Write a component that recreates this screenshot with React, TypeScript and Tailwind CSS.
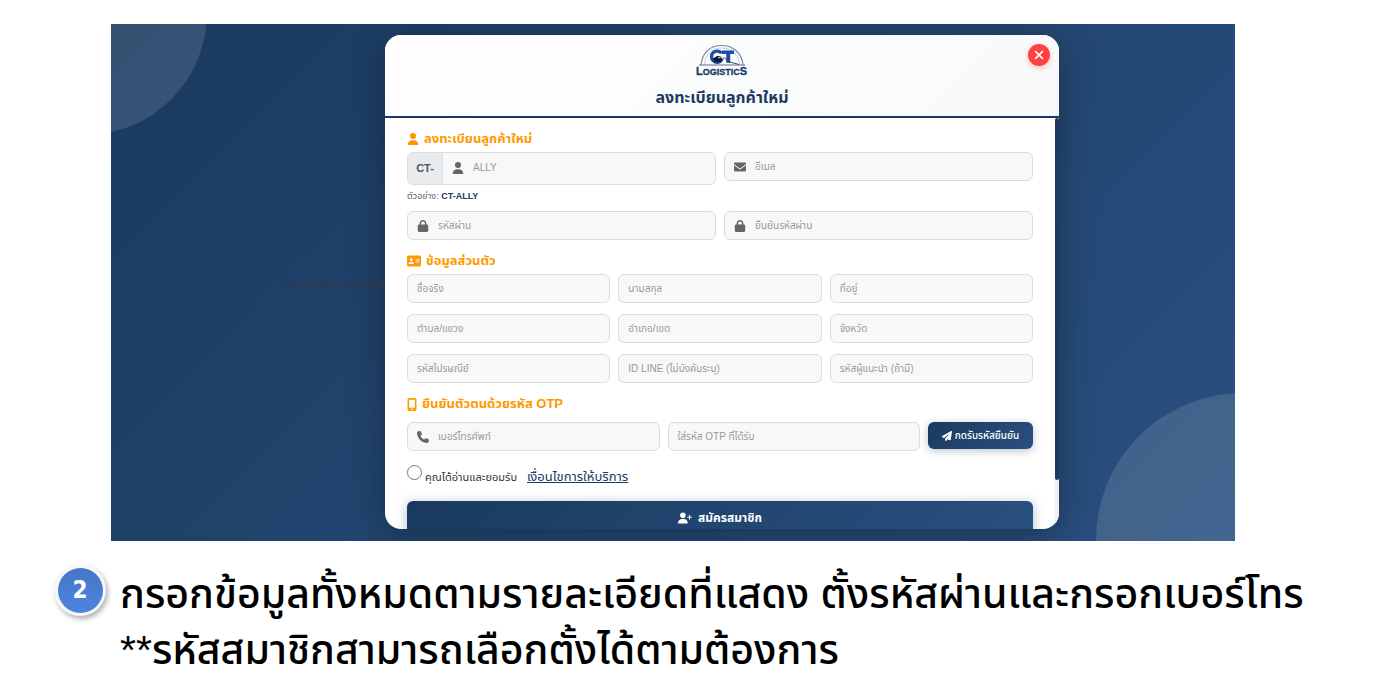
import type { ReactNode } from 'react'
import {
  FaAddressCard,
  FaEnvelope,
  FaLock,
  FaMobileScreenButton,
  FaPaperPlane,
  FaPhone,
  FaUser,
  FaUserPlus,
  FaXmark,
} from 'react-icons/fa6'

interface FieldProps {
  label: string
  type?: string
  icon?: ReactNode
}

function Field({ label, type = 'text', icon }: FieldProps) {
  return (
    <label className="flex h-[29px] min-w-0 items-center rounded-md border border-[#dcdcdc] bg-[#f8f8f8] px-[9px] text-xs text-[#666]">
      {icon && <span className="w-[21px] flex-shrink-0">{icon}</span>}
      <input
        type={type}
        aria-label={label}
        placeholder={label}
        className="w-full min-w-0 bg-transparent text-[10px] outline-none placeholder:text-[#999]"
      />
    </label>
  )
}

function SectionTitle({ icon, children }: { icon: ReactNode; children: ReactNode }) {
  return (
    <h2 className="flex h-5 items-center gap-[5px] text-[13px] font-bold text-[#ff9800]">
      {icon}
      {children}
    </h2>
  )
}

function Logo() {
  return (
    <svg width="54" height="34" viewBox="0 0 54 34" role="img" aria-label="CT Logistics">
      <path d="M6 21C7 9 15 1.500 26.500 1.500S47 9 48 21" fill="none" stroke="#7587a5" strokeWidth="1.1" />
      <path d="M9.500 20.500C10.500 10.500 16 4 26.500 4S43.500 10.500 44.500 20.500" fill="none" stroke="#b3bfd1" strokeWidth="0.8" />
      {/* Monogram */}
      <path d="M27 6.500h12v3.600h-3.800v8.600h-4v-8.600h-4.200z" fill="#1e4ba3" />
      <path d="M26.500 9.200A5.600 5.600 0 1 0 26.500 16.200" fill="none" stroke="#1e4ba3" strokeWidth="3.400" />
      {/* Handshake */}
      <path d="M18 14.500l4.500-2.800 3.500.8 3 2.500-2.500 2.500-3.500 1-4-1z" fill="#0d1b3d" />
      <path d="M23 14l2.500-1 2.500 2" fill="none" stroke="#fff" strokeWidth="0.900" />
      <path d="M28.500 13l4.500 4.500 11 3" fill="none" stroke="#1a3a5f" strokeWidth="0.900" />
      <path d="M4 21h46" stroke="#4a5f80" strokeWidth="0.900" />
      <text x="1" y="30.500" fontFamily="Liberation Sans, sans-serif" fontWeight="700" fill="#1a3a6b" stroke="#1a3a6b" strokeWidth="0.300">
        <tspan fontSize="11">L</tspan>
        <tspan fontSize="9">OGISTIC</tspan>
        <tspan fontSize="11">S</tspan>
      </text>
    </svg>
  )
}

function RegisterModal() {
  return (
    <section className="flex h-[494px] min-w-0 flex-col overflow-hidden rounded-2xl bg-white shadow-[0_8px_36px_rgba(0,0,0,0.3)]">
      <header className="relative flex h-[83px] flex-shrink-0 flex-col items-center border-b-2 border-[#1a3a5f] bg-linear-135 from-white to-[#f8f9fa] pt-[9px]">
        <Logo />
        <h1 className="mt-2 text-base leading-6 font-bold text-[#1a3a5f]">ลงทะเบียนลูกค้าใหม่</h1>
        <button
          type="button"
          aria-label="ปิด"
          className="absolute top-[9px] right-[9px] flex size-[22px] items-center justify-center rounded-full bg-[#ff4141] text-sm text-white shadow-[0_2px_6px_rgba(255,65,65,0.3)]"
        >
          <FaXmark />
        </button>
      </header>

      <div className="flex min-h-0 flex-1">
        <form className="min-w-0 flex-1 overflow-hidden px-[22px] pt-[11px]">
          <SectionTitle icon={<FaUser className="text-xs" />}>ลงทะเบียนลูกค้าใหม่</SectionTitle>
          <div className="mt-[3px] grid grid-cols-2 items-start gap-x-2">
            <div>
              <div className="flex h-[33px] overflow-hidden rounded-md border border-[#dcdcdc] bg-[#f8f8f8]">
                <span className="flex w-[35px] items-center justify-center border-r border-[#dcdcdc] bg-[#e9ecef] text-[11px] font-bold text-[#555]">
                  CT-
                </span>
                <label className="flex h-[29px] flex-1 items-center pl-[9px] text-xs text-[#666]">
                  <FaUser className="mr-[9px] flex-shrink-0" />
                  <input
                    aria-label="รหัสสมาชิก"
                    placeholder="ALLY"
                    className="w-full min-w-0 bg-transparent text-[10px] outline-none placeholder:text-[#999]"
                  />
                </label>
              </div>
              <p className="mt-1 h-[14px] text-[9px] leading-[14px] text-[#666]">
                ตัวอย่าง: <strong className="text-[#1a3a5f]">CT-ALLY</strong>
              </p>
            </div>
            <Field label="อีเมล" type="email" icon={<FaEnvelope />} />
          </div>
          <div className="mt-2 grid grid-cols-2 gap-x-2">
            <Field label="รหัสผ่าน" type="password" icon={<FaLock />} />
            <Field label="ยืนยันรหัสผ่าน" type="password" icon={<FaLock />} />
          </div>

          <div className="mt-[11px]">
            <SectionTitle icon={<FaAddressCard className="text-sm" />}>ข้อมูลส่วนตัว</SectionTitle>
          </div>
          <div className="mt-[3px] grid grid-cols-3 gap-x-2 gap-y-[11px]">
            <Field label="ชื่อจริง" />
            <Field label="นามสกุล" />
            <Field label="ที่อยู่" />
            <Field label="ตำบล/แขวง" />
            <Field label="อำเภอ/เขต" />
            <Field label="จังหวัด" />
            <Field label="รหัสไปรษณีย์" />
            <Field label="ID LINE (ไม่บังคับระบุ)" />
            <Field label="รหัสผู้แนะนำ (ถ้ามี)" />
          </div>

          <div className="mt-[11px]">
            <SectionTitle icon={<FaMobileScreenButton className="w-[10px]" />}>ยืนยันตัวตนด้วยรหัส OTP</SectionTitle>
          </div>
          <div className="mt-2 grid grid-cols-[1fr_1fr_105px] gap-x-2">
            <Field label="เบอร์โทรศัพท์" type="tel" icon={<FaPhone />} />
            <Field label="ใส่รหัส OTP ที่ได้รับ" />
            <button
              type="button"
              className="flex h-[27px] items-center justify-center gap-[3px] rounded-md bg-linear-135 from-[#1a3a5f] to-[#2a5080] text-[10px] font-medium whitespace-nowrap text-white shadow-[0_2px_8px_rgba(26,58,95,0.3)]"
            >
              <FaPaperPlane />
              กดรับรหัสยืนยัน
            </button>
          </div>

          <div className="mt-[14px] flex h-6 items-start">
            <input
              type="radio"
              id="terms"
              className="size-[15px] appearance-none rounded-full border border-[#767676] bg-white"
            />
            <label htmlFor="terms" className="ml-[3px] pt-1 text-[11px] leading-4 text-[#333]">
              คุณได้อ่านและยอมรับ
            </label>
            <a href="#terms" className="ml-[10px] pt-1 text-[13px] leading-4 text-[#1a3a5f] underline">
              เงื่อนไขการให้บริการ
            </a>
          </div>

          <button
            type="submit"
            className="mt-3 flex h-[34px] w-full items-center justify-center gap-[6px] rounded-md bg-linear-135 from-[#1a3a5f] to-[#2a5080] text-xs font-bold text-white shadow-[0_2px_12px_rgba(26,58,95,0.35)]"
          >
            <FaUserPlus className="text-sm" />
            สมัครสมาชิก
          </button>
        </form>

        {/* Scroll track */}
        <div className="w-1 flex-shrink-0 bg-[#f1f1f1]">
          <div className="h-[88%] rounded-sm bg-[#1a3a5f]" />
        </div>
      </div>
    </section>
  )
}

export default function App() {
  return (
    <main className="min-h-screen bg-white pt-6 font-['Liberation_Sans','Noto_Sans_Thai',sans-serif]">
      <div className="pr-[141px] pl-[111px]">
        <div className="relative isolate grid grid-cols-[274fr_674fr_176fr] overflow-hidden bg-linear-135 from-[#1a3a5f] to-[#2a5080] pt-[11px] pb-3">
          <div className="absolute -top-[133px] -left-[148px] -z-10 size-[244px] rounded-full bg-white/12" />
          <div className="absolute -right-[155px] -bottom-[146px] -z-10 size-[294px] rounded-full bg-white/12" />
          <p className="z-10 self-center pt-[3px] pl-[170px] font-['Noto_Sans',sans-serif] text-[11px] whitespace-nowrap text-[#333b48]">
            The number is: ABD
          </p>
          <RegisterModal />
        </div>
      </div>

      <div className="flex items-start gap-[14px] pt-[23px] pl-[54px]">
        <div className="flex size-[52px] flex-shrink-0 items-center justify-center rounded-full bg-[#f7f7f7] shadow-[2px_3px_5px_rgba(0,0,0,0.3)]">
          <span className="flex size-[45px] items-center justify-center rounded-full bg-linear-to-b from-[#4676c8] to-[#4c86e0] font-['DejaVu_Sans_Condensed','Liberation_Sans',sans-serif] text-2xl font-bold text-white">
            2
          </span>
        </div>
        <p className="pt-[2px] text-[41px] leading-[56px] font-medium whitespace-nowrap text-black">
          กรอกข้อมูลทั้งหมดตามรายละเอียดที่แสดง ตั้งรหัสผ่านและกรอกเบอร์โทร
          <br />
          **รหัสสมาชิกสามารถเลือกตั้งได้ตามต้องการ
        </p>
      </div>
    </main>
  )
}
